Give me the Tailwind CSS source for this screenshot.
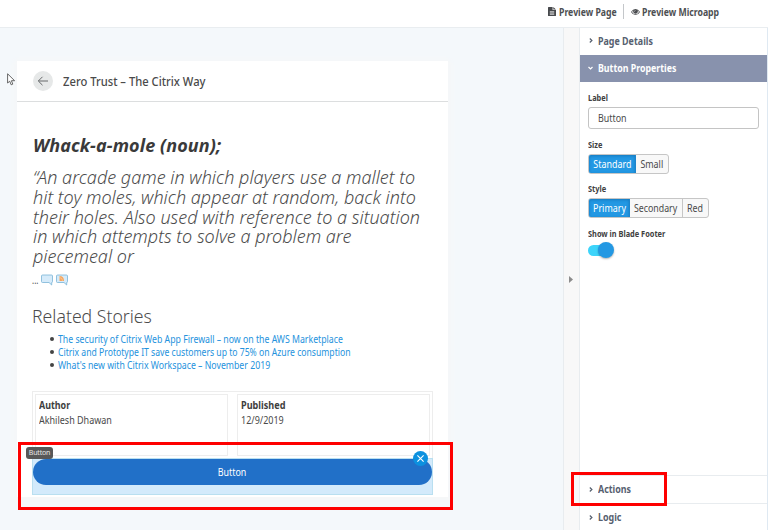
<!DOCTYPE html>
<html lang="en">
<head>
<meta charset="utf-8">
<title>Page builder</title>
<script src="https://cdn.jsdelivr.net/npm/@tailwindcss/browser@4"></script>
</head>
<body class="relative flex h-[530px] w-[768px] flex-col overflow-hidden bg-white font-['Noto_Sans',sans-serif] text-[10px] leading-none whitespace-nowrap text-[#4a4a4a]">

<header class="flex h-7 shrink-0 items-center border-b border-[#e9edf0] pb-1 pl-[548px] font-bold text-[#4d4f52]">
  <svg class="mr-[3px] h-[9px] w-2 shrink-0" viewBox="0 0 8 9"><path fill="#484a4d" d="M0 .6Q0 0 .6 0H4.600V3H8V8.400Q8 9 7.400 9H.6Q0 9 0 8.400ZM5.300 0 8 2.400H5.300Z"/><path stroke="#fff" stroke-width=".7" d="M1.800 4.700H6.200M1.800 6H6.200M1.800 7.300H6.200"/></svg>
  <span class="w-[64px]"><span class="inline-block origin-left scale-x-[0.87]">Preview Page</span></span>
  <span class="mr-[7px] h-[15px] w-px bg-[#c4c7ca]"></span>
  <svg class="mr-[3px] h-2 w-[9px] shrink-0" viewBox="0 0 9 8"><path fill="#484a4d" fill-rule="evenodd" d="M0 4Q1.800 1 4.500 1T9 4Q7.200 7 4.500 7T0 4ZM1 4Q2.300 6.200 4.500 6.200T8 4Q7.400 2.900 6.500 2.300 7 3 6.800 4 6.300 5.800 4.500 5.800T2.200 4Q2 3 2.500 2.300 1.600 2.900 1 4ZM3.200 3.700Q3.300 2.400 4.500 2.200L4.500 2.700Q3.700 2.800 3.700 3.700Z"/></svg>
  <span class="-ml-px origin-left scale-x-[0.87]">Preview Microapp</span>
</header>

<div class="flex min-h-0 flex-1">
  <main class="w-[563px] shrink-0 bg-[#f4f8fb] pt-[33px] pl-[17px]">
    <section class="h-[436px] w-[431px] bg-white shadow-[0_2px_5px_3px_#f6f7f8]">
      <div class="flex h-[41px] items-center border-b border-[#dcdedf] pl-4">
        <span class="flex size-5 items-center justify-center rounded-full bg-[#e6e8e8]">
          <svg class="size-3" viewBox="0 0 12 12" fill="none" stroke="#66696b" stroke-width="1"><path d="M11 6H1.500M5.500 1.800 1.300 6 5.500 10.200"/></svg>
        </span>
        <h1 class="ml-[10px] origin-left scale-x-[0.935] pt-px text-[12px] font-medium">Zero Trust – The Citrix Way</h1>
      </div>
      <div class="pl-[15px]">
        <h2 class="mt-[31px] ml-px h-6 text-[18px] leading-6 font-bold tracking-[0.1px] text-[#3a3a3a] italic">Whack-a-mole (noun);</h2>
        <p class="mt-[11px] ml-px text-[18px] leading-[19.800px] font-light text-[#4c4c4c] italic">“An arcade game in which players use a mallet to<br>hit toy moles, which appear at random, back into<br>their holes. Also used with reference to a situation<br>in which attempts to solve a problem are<br>piecemeal or</p>
        <div class="mt-[7px] flex h-3 items-center">
          <span class="w-[9px]"><span class="inline-block origin-left scale-x-[0.8]">...</span></span>
          <svg class="h-3 w-[12px]" viewBox="0 0 12 12"><path fill="#d6ebfa" stroke="#79b4d6" stroke-width=".8" d="M1.500 1H10.500Q11.500 1 11.500 2V7.500Q11.500 8.500 10.700 8.500V11L8 8.500H1.500Q.5 8.500 .5 7.500V2Q.5 1 1.500 1Z"/></svg>
          <svg class="ml-[3px] h-3 w-[12px]" viewBox="0 0 12 12"><path fill="#d6ebfa" stroke="#79b4d6" stroke-width=".8" d="M1.500 1H10.500Q11.500 1 11.500 2V7.500Q11.500 8.500 10.700 8.500V11L8 8.500H1.500Q.5 8.500 .5 7.500V2Q.5 1 1.500 1Z"/><path fill="#f6a65e" d="M3.500 2Q8 2 8 7H3.500Z"/><path fill="none" stroke="#fbd9b8" stroke-width=".6" d="M3.700 3.600Q6.400 3.700 6.500 6.800"/></svg>
        </div>
        <h3 class="mt-[18px] h-6 w-fit origin-left scale-x-[0.98] text-[18px] leading-6 font-light text-[#4c4c4c]">Related Stories</h3>
        <ul class="mt-[5px] pl-[18px] leading-[13px] text-[#2492dd]">
          <li class="flex items-center gap-[4px]"><span class="size-1 rounded-full bg-[#444]"></span><a class="origin-left scale-x-[0.873]">The security of Citrix Web App Firewall – now on the AWS Marketplace</a></li>
          <li class="flex items-center gap-[4px]"><span class="size-1 rounded-full bg-[#444]"></span><a class="origin-left scale-x-[0.862]">Citrix and Prototype IT save customers up to 75% on Azure consumption</a></li>
          <li class="flex items-center gap-[4px]"><span class="size-1 rounded-full bg-[#444]"></span><a class="origin-left scale-x-[0.873]">What's new with Citrix Workspace – November 2019</a></li>
        </ul>
        <div class="mt-[19px] flex h-[67px] w-[401px] justify-between border border-b-0 border-[#ededed] px-[2px] pt-[2px]">
          <div class="h-[62px] w-[193px] border border-[#ededed] pt-[5px] pl-[3px]"><div class="w-fit origin-left scale-x-[0.89] font-bold text-[#3e3e3e]">Author</div><div class="mt-[5px] w-fit origin-left scale-x-[0.9]">Akhilesh Dhawan</div></div>
          <div class="h-[62px] w-[193px] border border-[#ededed] pt-[5px] pl-[3px]"><div class="w-fit origin-left scale-x-[0.91] font-bold text-[#3e3e3e]">Published</div><div class="mt-[5px] w-fit origin-left scale-x-[0.9]">12/9/2019</div></div>
        </div>
        <div class="relative h-[37px] w-[401px] border border-[#b9dff0] bg-[#d3eafb]">
          <div class="flex h-[26px] items-center justify-center rounded-full bg-[#2170c8] text-white"><span class="scale-x-[0.89]">Button</span></div>
          <span class="absolute -top-3 -left-[7px] flex h-3 w-[27px] items-center justify-center rounded-[3px] bg-[#585858] text-[7px] tracking-[-0.2px] text-[#e6e6e6]">Button</span>
          <span class="absolute -top-[8px] right-[4px] flex size-[15px] items-center justify-center rounded-full bg-[#0c91df]"><svg class="size-[7px]" viewBox="0 0 7 7" stroke="#fff" stroke-width="1.100"><path d="M.4.4 6.600 6.600M6.600.4.4 6.600"/></svg></span>
        </div>
      </div>
    </section>
  </main>

  <div class="flex w-[17px] shrink-0 items-center justify-center border-x border-[#e8ecef] bg-[#f8f8f8] pr-px">
    <svg class="h-[7px] w-1" viewBox="0 0 4 7"><path fill="#8c8c8c" d="M0 0 4 3.500 0 7Z"/></svg>
  </div>

  <aside class="flex w-[188px] shrink-0 flex-col border-r border-[#dfe9f2] font-bold">
    <div class="flex h-[27px] items-center pb-[2px] pl-[9px] text-[#566070]">
      <svg class="mr-[5px] h-[5px] w-1" viewBox="0 0 4 5" fill="none" stroke="currentColor" stroke-width="1.200"><path d="M.8.500 2.900 2.500.8 4.500"/></svg><span class="origin-left scale-x-[0.89]">Page Details</span>
    </div>
    <div class="flex h-[27px] items-center bg-[#8892ad] pb-px pl-[8px] text-white">
      <svg class="mr-[5px] h-1 w-[5px]" viewBox="0 0 5 4" fill="none" stroke="currentColor" stroke-width="1.200"><path d="M.5 1 2.500 3 4.500 1"/></svg><span class="origin-left scale-x-[0.88]">Button Properties</span>
    </div>
    <div class="flex-1 pt-[10px] pl-2 text-[8.500px] text-[#404040]">
      <div class="h-3 w-fit origin-left scale-x-[0.87] leading-3">Label</div>
      <div class="mt-[3px] flex h-[22px] w-[171px] items-center rounded-[3px] border border-[#c4c4c4] pl-[9px] text-[10px] font-normal text-[#4a4a4a]"><span class="origin-left scale-x-[0.89]">Button</span></div>
      <div class="mt-[10px] h-3 w-fit origin-left scale-x-[0.87] leading-3">Size</div>
      <div class="mt-[3px] flex h-5 w-fit items-stretch overflow-hidden rounded-[3px] border border-[#c6c6c6] bg-[#f8f8f8] text-[10px] font-normal text-[#4a4a4a]">
        <span class="-m-px flex w-[48px] items-center justify-center rounded-l-[3px] border border-[#1d85cc] bg-[#2398e3] text-white shadow-[inset_0_1px_3px_#1578bd]"><span class="scale-x-[0.89]">Standard</span></span>
        <span class="flex w-[33px] items-center justify-center"><span class="scale-x-[0.89]">Small</span></span>
      </div>
      <div class="mt-[9px] h-3 w-fit origin-left scale-x-[0.87] leading-3">Style</div>
      <div class="mt-[3px] flex h-5 w-fit items-stretch overflow-hidden rounded-[3px] border border-[#c6c6c6] bg-[#f8f8f8] text-[10px] font-normal text-[#4a4a4a]">
        <span class="-m-px flex w-[42px] items-center justify-center rounded-l-[3px] border border-[#1d85cc] bg-[#2398e3] text-white shadow-[inset_0_1px_3px_#1578bd]"><span class="scale-x-[0.89]">Primary</span></span>
        <span class="flex w-[54px] items-center justify-center border-r border-[#c6c6c6]"><span class="scale-x-[0.88]">Secondary</span></span>
        <span class="flex w-[25px] items-center justify-center"><span class="scale-x-[0.89]">Red</span></span>
      </div>
      <div class="mt-[10px] h-3 w-fit origin-left scale-x-[0.87] leading-3">Show in Blade Footer</div>
      <div class="mt-[2px] flex h-4 w-[26px] items-center"><span class="h-[11px] w-[18px] rounded-l-full bg-[#3dd4fa]"></span><span class="-ml-[8px] size-4 shrink-0 rounded-full bg-[#2398e3] shadow-[0_1px_2px_rgba(0,0,0,0.3)]"></span></div>
    </div>
    <div class="flex h-[28px] shrink-0 items-center border-t border-[#e8ecef] pb-px pl-[9px] text-[#566070]">
      <svg class="mr-[5px] h-[5px] w-1" viewBox="0 0 4 5" fill="none" stroke="currentColor" stroke-width="1.200"><path d="M.8.500 2.900 2.500.8 4.500"/></svg><span class="origin-left scale-x-[0.89]">Actions</span>
    </div>
    <div class="flex h-[27px] shrink-0 items-center border-t border-[#e8ecef] pl-[9px] text-[#566070]">
      <svg class="mr-[5px] h-[5px] w-1" viewBox="0 0 4 5" fill="none" stroke="currentColor" stroke-width="1.200"><path d="M.8.500 2.900 2.500.8 4.500"/></svg><span class="origin-left scale-x-[0.89]">Logic</span>
    </div>
  </aside>
</div>

<svg class="absolute top-[73px] left-[7px] h-[13px] w-[9px]" viewBox="0 0 9 13"><path fill="#fff" stroke="#555" stroke-width=".9" d="M.6.8V10L2.700 8.200 4.200 11.800 5.800 11.100 4.400 7.700H7.600Z"/></svg>
<div class="absolute top-[442px] left-[18px] h-[68px] w-[435px] border-3 border-[#fe0000]"></div>
<div class="absolute top-[472px] left-[571px] h-[34px] w-[96px] border-3 border-[#fe0000]"></div>
</body>
</html>
